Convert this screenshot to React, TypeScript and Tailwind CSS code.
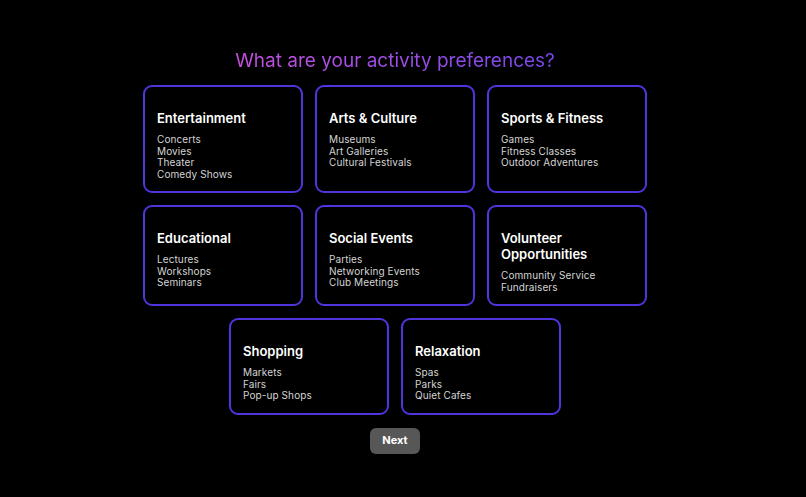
import React from "react";

const cards = [
  { title: "Entertainment", items: ["Concerts", "Movies", "Theater", "Comedy Shows"] },
  { title: "Arts & Culture", items: ["Museums", "Art Galleries", "Cultural Festivals"] },
  { title: "Sports & Fitness", items: ["Games", "Fitness Classes", "Outdoor Adventures"] },
  { title: "Educational", items: ["Lectures", "Workshops", "Seminars"] },
  { title: "Social Events", items: ["Parties", "Networking Events", "Club Meetings"] },
  { title: "Volunteer Opportunities", items: ["Community Service", "Fundraisers"] },
  { title: "Shopping", items: ["Markets", "Fairs", "Pop-up Shops"] },
  { title: "Relaxation", items: ["Spas", "Parks", "Quiet Cafes"] },
];

function Card({ title, items }: { title: string; items: string[] }) {
  return (
    <div className="w-[160px] rounded-[9px] border-2 border-[#5034dc] bg-black pl-[12px] pr-[12px] pt-[23px] pb-[11px]">
      <h3 className="text-[13px] leading-[16px] font-semibold text-white mb-[8px]">{title}</h3>
      <ul>
        {items.map((i) => (
          <li key={i} className="text-[10px] leading-[11.5px] text-[#d4d4d4] tracking-[0.1px]">
            {i}
          </li>
        ))}
      </ul>
    </div>
  );
}

export default function App() {
  return (
    <div
      className="w-full h-[497px] bg-black flex flex-col items-center pr-[16px] pt-[48px]"
      style={{ fontFamily: "Inter, 'Noto Sans', sans-serif" }}
    >
      <h1 className="text-[19px] leading-[26px] font-normal bg-gradient-to-r from-[#c64fe0] to-[#7746ea] bg-clip-text text-transparent mb-[11px]">
        What are your activity preferences?
      </h1>
      <div className="flex flex-wrap justify-center gap-[12px] w-[504px]">
        {cards.map((c) => (
          <Card key={c.title} {...c} />
        ))}
      </div>
      <button className="mt-[13px] w-[50px] h-[26px] rounded-[6px] bg-[#575757] text-white text-[11px] font-bold">
        Next
      </button>
    </div>
  );
}
